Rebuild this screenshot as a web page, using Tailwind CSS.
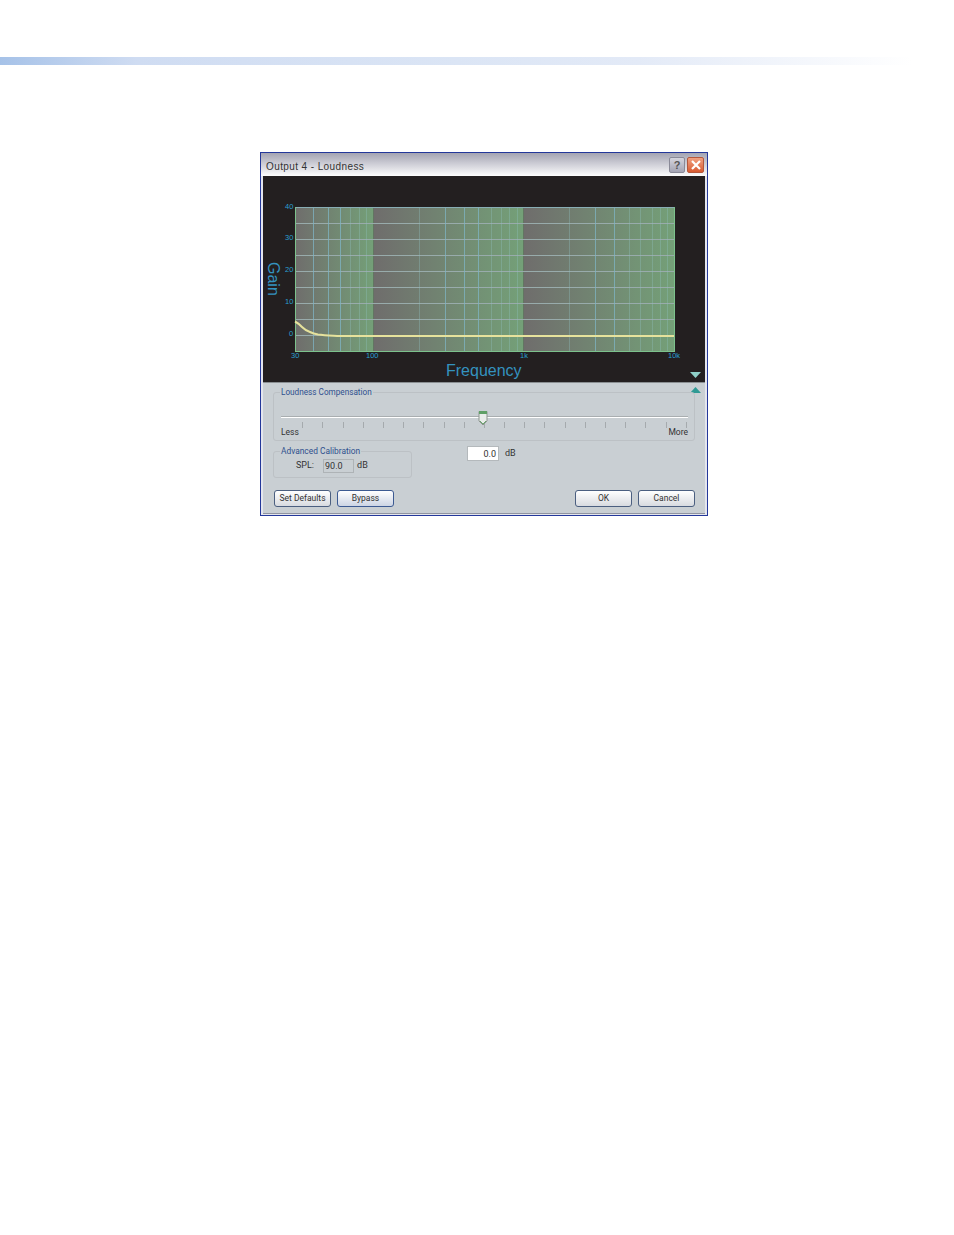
<!DOCTYPE html>
<html lang="en">
  <head>
    <meta charset="UTF-8" />
    <script src="https://cdn.jsdelivr.net/npm/@tailwindcss/browser@4"></script>
    <title>Output 4 - Loudness</title>
  </head>
  <body class="bg-white font-['Liberation_Sans',sans-serif]">
    <div class="w-[954px] h-[1235px] pt-[57px]">
      <div class="h-2 w-[912px] bg-[linear-gradient(90deg,#a6c2e8_0%,#cfdcf2_15%,#dbe5f5_50%,#e3eaf7_70%,#ffffff_100%)]"></div>

      <!-- dialog -->
      <div class="w-[448px] h-[364px] mt-[87px] ml-[260px] border border-[#24389a] flex flex-col bg-[#e4e6ee] px-[2px] pb-[1px]">
        <div class="h-[23px] -mx-[2px] px-[5px] pt-[4px] flex items-center justify-between bg-gradient-to-b from-[#a4a4b2] via-[#d0d0d8] to-[#fdfdfd]">
          <span class="text-[10px] tracking-[0.4px] text-[#333]">Output 4 - Loudness</span>
          <div class="flex gap-[2px] mr-[-2px] -mt-[4px]">
            <div class="w-[16px] h-[16px] rounded-[2px] border border-[#8a8a98] bg-gradient-to-b from-[#d5d5de] to-[#a4a4b4] text-[#555] text-[11px] font-bold leading-[14px] text-center">?</div>
            <div class="w-[17px] h-[16px] rounded-[2px] border border-[#b5583c] bg-gradient-to-b from-[#f0a080] to-[#d85a30] flex items-center justify-center">
              <svg class="w-[12px] h-[12px]" viewBox="0 0 12 12"><path d="M2 2l8 8M10 2l-8 8" stroke="#fff" stroke-width="2.2" fill="none" /></svg>
            </div>
          </div>
        </div>

        <!-- graph -->
        <div class="relative h-[207px] bg-[#231f20] border-b border-[#8a8f92]">
          <svg class="absolute left-0 top-0" width="443" height="206" viewBox="263 176 443 206">
            <defs>
              <linearGradient id="band"><stop offset="0" stop-color="#6f6d6c" /><stop offset="1" stop-color="#74a078" /></linearGradient>
            </defs>
            <rect x="295" y="207" width="78.7" height="145" fill="url(#band)" />
            <rect x="373.7" y="207" width="150" height="145" fill="url(#band)" />
            <rect x="523.7" y="207" width="151" height="145" fill="url(#band)" />
            <path d="M295 223.5H675M295 239.5H675M295 255.5H675M295 271.5H675M295 287.5H675M295 303.5H675M295 319.5H675M295 335.5H675" stroke="#98abab" />
            <g stroke="#7fb4c4" stroke-opacity="0.75">
              <path d="M313.5 207V352M328.5 207V352M340.5 207V352" />
              <path d="M445.5 207V352M464.5 207V352M478.5 207V352" />
              <path d="M595.5 207V352M614.5 207V352" />
            </g>
            <g stroke="#8fc0c0" stroke-opacity="0.35">
              <path d="M350.5 207V352M359.5 207V352M366.5 207V352" />
              <path d="M419.5 207V352M491.5 207V352M501.5 207V352M509.5 207V352M517.5 207V352" />
              <path d="M569.5 207V352M629.5 207V352M640.5 207V352M652.5 207V352M660.5 207V352M667.5 207V352" />
            </g>
            <path d="M295 207.5H675" stroke="#88adb4" fill="none" />
            <path d="M295.5 207V352M295 351.5H675M674.5 207V352" stroke="#7cc18c" fill="none" />
            <path d="M295 321.5C298 323 300 325 302 327C305 330 307 331 310 332C313 333.5 315 334 318 334.5C325 335.5 330 335.5 340 336H674" stroke="#e6e29c" stroke-width="2" fill="none" />
          </svg>
          <span class="absolute left-[22px] top-[25px] text-[7.5px] text-[#2a9fd0]">40</span>
          <span class="absolute left-[22px] top-[56px] text-[7.5px] text-[#2a9fd0]">30</span>
          <span class="absolute left-[22px] top-[88px] text-[7.5px] text-[#2a9fd0]">20</span>
          <span class="absolute left-[22px] top-[120px] text-[7.5px] text-[#2a9fd0]">10</span>
          <span class="absolute left-[26px] top-[152px] text-[7.5px] text-[#2a9fd0]">0</span>
          <span class="absolute left-[28px] top-[174px] text-[7.5px] text-[#2a9fd0]">30</span>
          <span class="absolute left-[103px] top-[174px] text-[7.5px] text-[#2a9fd0]">100</span>
          <span class="absolute left-[257px] top-[174px] text-[7.5px] text-[#2a9fd0]">1k</span>
          <span class="absolute left-[405px] top-[174px] text-[7.5px] text-[#2a9fd0]">10k</span>
          <span class="absolute left-[-7px] top-[94px] rotate-90 text-[16px] leading-[18px] w-[34px] text-[#3492bf]">Gain</span>
          <span class="absolute left-[183px] top-[186px] text-[16px] leading-[18px] text-[#3492bf]">Frequency</span>
          <svg class="absolute left-[427px] top-[196px]" width="11" height="6" viewBox="0 0 11 6"><path d="M0 0H11L5.5 6Z" fill="#8fd0c8" /></svg>
        </div>

        <!-- controls -->
        <div class="relative flex-1 px-[10px] pt-[5px] bg-[#c9cfd3] border-b border-[#8f93a0] font-['Roboto',sans-serif]">
          <svg class="absolute left-[427px] top-[4px]" width="11" height="6" viewBox="0 0 11 6"><path d="M0 6H11L5.5 0Z" fill="#2f9a94" /></svg>

          <fieldset class="relative h-[53px] border border-[#bcc1c5] rounded-[3px]">
            <legend class="ml-[6px] px-[1px] text-[8.2px] leading-[9px] text-[#2f4f8e]">Loudness Compensation</legend>
            <div class="absolute left-[7px] right-[6px] top-[19px] h-[2px] bg-[#a9aeb0] border-b border-white"></div>
            <div class="absolute left-[7px] right-[6px] top-[25px] flex justify-between px-[1px]">
              <i class="w-px h-[6px]"></i><i class="w-px h-[6px] bg-[#a5aaad]"></i><i class="w-px h-[6px] bg-[#a5aaad]"></i><i class="w-px h-[6px] bg-[#a5aaad]"></i><i class="w-px h-[6px] bg-[#a5aaad]"></i><i class="w-px h-[6px] bg-[#a5aaad]"></i><i class="w-px h-[6px] bg-[#a5aaad]"></i><i class="w-px h-[6px] bg-[#a5aaad]"></i><i class="w-px h-[6px] bg-[#a5aaad]"></i><i class="w-px h-[6px] bg-[#a5aaad]"></i><i class="w-px h-[6px] bg-[#a5aaad]"></i><i class="w-px h-[6px] bg-[#a5aaad]"></i><i class="w-px h-[6px] bg-[#a5aaad]"></i><i class="w-px h-[6px] bg-[#a5aaad]"></i><i class="w-px h-[6px] bg-[#a5aaad]"></i><i class="w-px h-[6px] bg-[#a5aaad]"></i><i class="w-px h-[6px] bg-[#a5aaad]"></i><i class="w-px h-[6px] bg-[#a5aaad]"></i><i class="w-px h-[6px] bg-[#a5aaad]"></i><i class="w-px h-[6px] bg-[#a5aaad]"></i><i class="w-px h-[6px] bg-[#a5aaad]"></i>
            </div>
            <svg class="absolute left-[204px] top-[13px]" width="10" height="16" viewBox="0 0 10 16"><path d="M1 1.5H9V11L5 15L1 11Z" fill="#e9ecea" stroke="#8d968f" /><path d="M1 2.5H9" stroke="#5f9f66" stroke-width="3" /><path d="M2 11L5 14L8 11" stroke="#6aa56e" fill="none" /></svg>
            <div class="absolute left-[7px] right-[6px] top-[30px] flex justify-between text-[8.5px] leading-[10px] text-[#333]"><span>Less</span><span>More</span></div>
          </fieldset>

          <div class="relative flex mt-[6px]">
            <fieldset class="w-[139px] h-[31px] border border-[#bcc1c5] rounded-[3px]">
              <legend class="ml-[6px] px-[1px] text-[8.4px] leading-[9px] text-[#2f4f8e]">Advanced Calibration</legend>
              <div class="flex items-center text-[9px] text-[#333] pl-[22px] mt-[3px]">
                <span>SPL:</span>
                <span class="ml-[9px] w-[31px] h-[14px] border border-[#aeb3b6] bg-[#c9cfd3] leading-[12px] pl-[1px]">90.0</span>
                <span class="ml-[3px]">dB</span>
              </div>
            </fieldset>
            <div class="flex items-start ml-[55px] text-[9px] text-[#333] -mt-[1px]">
              <span class="w-[32px] h-[15px] bg-white border border-[#b4b9bc] leading-[14px] text-right pr-[2px]">0.0</span>
              <span class="ml-[6px] leading-[14px]">dB</span>
            </div>
          </div>

          <div class="flex mt-[12px] text-[8.5px] text-[#333]">
            <button class="ml-[1px] w-[57px] h-[17px] rounded-[3px] border border-[#4b5f80] bg-gradient-to-b from-white to-[#d8dbe0]">Set Defaults</button>
            <button class="ml-[6px] w-[57px] h-[17px] rounded-[3px] border border-[#3c5a92] bg-gradient-to-b from-white to-[#cdd5e4]">Bypass</button>
            <button class="ml-auto w-[57px] h-[17px] rounded-[3px] border border-[#4b5f80] bg-gradient-to-b from-white to-[#d8dbe0]">OK</button>
            <button class="ml-[6px] w-[57px] h-[17px] rounded-[3px] border border-[#4b5f80] bg-gradient-to-b from-white to-[#d8dbe0]">Cancel</button>
          </div>
        </div>
      </div>
    </div>
  </body>
</html>
